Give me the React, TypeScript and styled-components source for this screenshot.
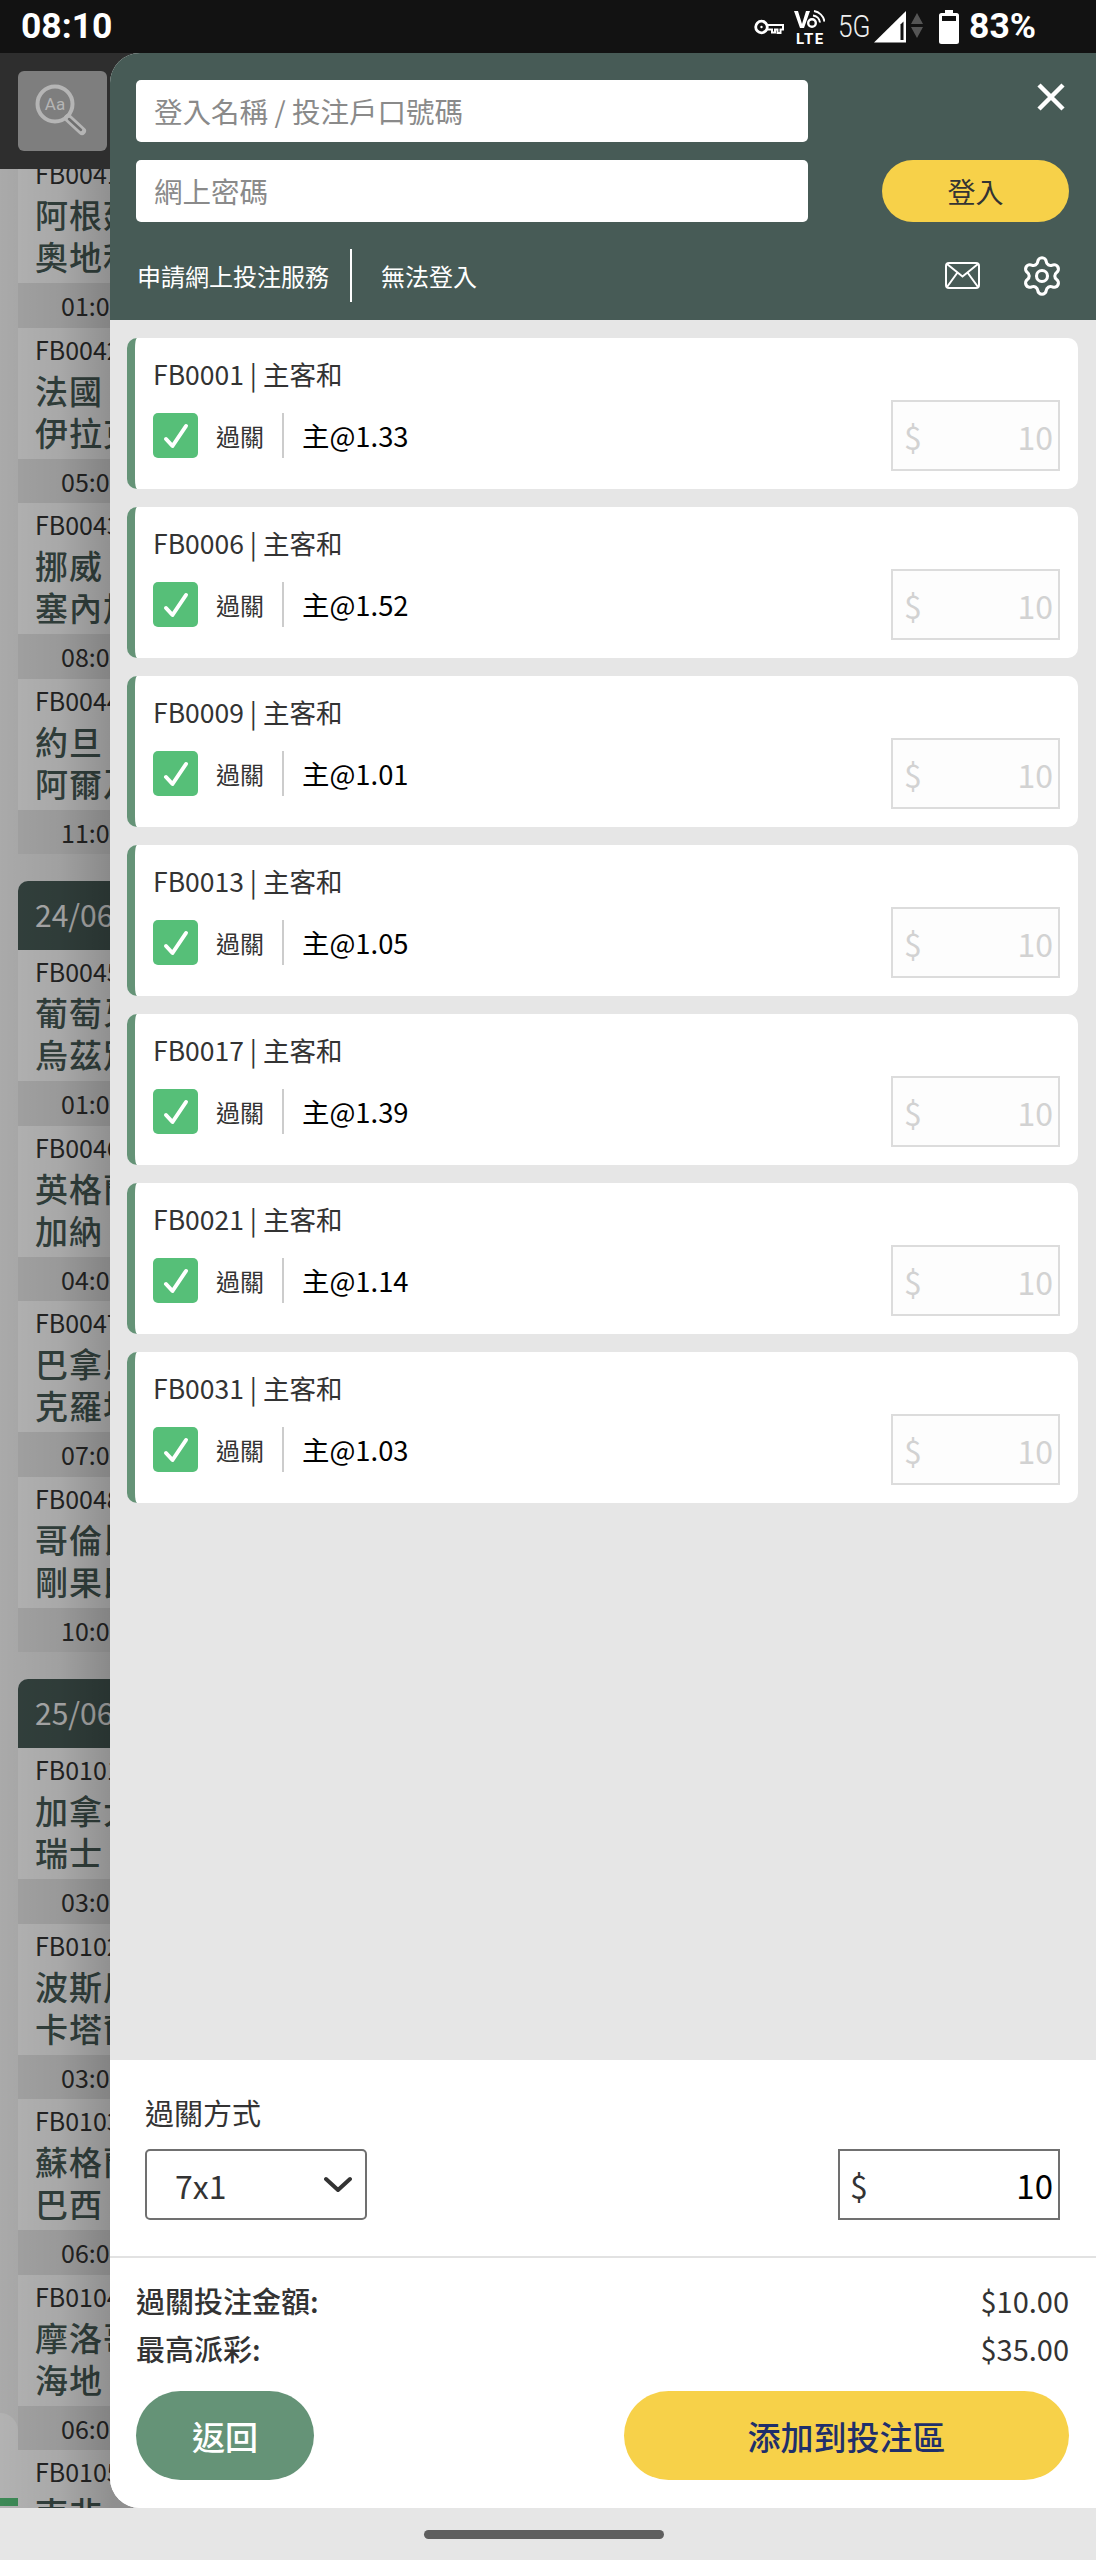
import React from 'react';
import styled, { createGlobalStyle } from 'styled-components';
import { Settings } from 'lucide-react';

const CJK = `"Noto Sans CJK TC", "Noto Sans", sans-serif`;

const Global = createGlobalStyle`
  html, body { margin: 0; padding: 0; background: #e6e6e6; }
  * { box-sizing: border-box; }
  body { font-family: ${CJK}; }
`;

const Page = styled.div`
  width: 1096px;
  height: 2560px;
  position: relative;
  overflow: hidden;
  display: grid;
  grid-template-rows: 53px 1fr 52px;
`;

/* status bar */
const StatusBar = styled.div`
  background: #121212;
  color: #fff;
  display: flex;
  align-items: center;
  justify-content: space-between;
  padding: 0 60px 0 21px;
  font-family: Roboto, sans-serif;
  z-index: 3;
`;
const Clock = styled.div`
  font-size: 35.5px;
  font-weight: 700;
  line-height: 1;
`;
const StatusIcons = styled.div`
  display: flex;
  align-items: center;
`;
const FiveG = styled.span`
  font-size: 31px;
  font-weight: 300;
  display: inline-block;
  width: 30px;
  margin: 0 6px 0 13px;
  transform: scaleX(0.85);
  transform-origin: left center;
  line-height: 1;
  color: #eee;
  white-space: nowrap;
`;
const Percent = styled.span`
  font-size: 35.5px;
  font-weight: 700;
  margin-left: 10px;
  line-height: 1;
`;

/* page behind the sheet */
const Behind = styled.div`
  position: relative;
  overflow: hidden;
  background: #f3f3f3;
  display: flex;
  flex-direction: column;
`;
const AppHeader = styled.div`
  height: 116px;
  flex: none;
  background: #2e2e2e;
  padding: 18px;
  position: relative;
  z-index: 1;
`;
const SearchBtn = styled.div`
  width: 89px;
  height: 80px;
  border-radius: 6px;
  background: #7e7e7e;
`;
const Feed = styled.div`
  margin-top: -17px;
  padding: 0 0 0 18px;
`;
const Group = styled.div`
  margin-bottom: 27px;
`;
const DateBar = styled.div`
  height: 69px;
  background: #475b56;
  border-radius: 10px 10px 0 0;
  color: #f2f2f2;
  font-size: 30px;
  padding: 0 0 0 17px;
  line-height: 67px;
  white-space: nowrap;
`;
const MatchBlock = styled.div`
  height: 131px;
  background: #fff;
  padding: 6px 0 0 17px;
  white-space: nowrap;
  overflow: hidden;
`;
const MatchCode = styled.div`
  font-size: 25px;
  line-height: 30px;
  margin-bottom: 5px;
  color: #333;
`;
const MatchName = styled.div`
  font-size: 33px;
  line-height: 42px;
  color: #475b56;
  font-weight: 500;
  letter-spacing: 1px;
`;
const TimeBlock = styled.div`
  height: 44.5px;
  background: #e8e8e8;
  color: #333;
  font-size: 25px;
  line-height: 44px;
  padding-left: 43px;
  white-space: nowrap;
`;
const EdgeTab = styled.div`
  position: absolute;
  left: 0;
  bottom: 0;
  width: 18px;
  height: 95px;
  background: linear-gradient(#fff 0 85px, #57c47b 85px 93px, #fff 93px);
  border-top-right-radius: 18px;
`;
const Scrim = styled.div`
  position: absolute;
  inset: 0;
  background: linear-gradient(
    90deg,
    rgba(0, 0, 0, 0.3) 0,
    rgba(0, 0, 0, 0.34) 60px,
    rgba(0, 0, 0, 0.44) 112px
  );
`;

/* sheet */
const Sheet = styled.div`
  position: absolute;
  top: 53px;
  bottom: 52px;
  left: 110px;
  right: 0;
  z-index: 2;
  background: #fff;
  border-radius: 30px 0 0 30px;
  overflow: hidden;
  display: flex;
  flex-direction: column;
`;
const SheetHeader = styled.div`
  height: 267px;
  flex: none;
  background: #475b56;
  padding: 27px 27px 0 26px;
  display: flex;
  flex-direction: column;
`;
const LoginRow = styled.div`
  display: flex;
  justify-content: space-between;
  align-items: flex-start;
  margin-bottom: 18px;
`;
const TextInput = styled.input`
  width: 672px;
  height: 62px;
  border: 0;
  border-radius: 5px;
  background: #fff;
  padding: 0 18px 2px;
  font-family: ${CJK};
  font-size: 28.5px;
  outline: none;
  &::placeholder { color: #8a8a8a; opacity: 1; }
`;
const CloseBtn = styled.div`
  width: 28px;
  height: 28px;
  margin: 3px 4px 0 0;
`;
const LoginBtn = styled.div`
  width: 187px;
  height: 62px;
  border-radius: 31px;
  background: #f7d149;
  color: #333;
  font-size: 28px;
  display: flex;
  align-items: center;
  justify-content: center;
`;
const LinksRow = styled.div`
  display: flex;
  align-items: center;
  justify-content: space-between;
  margin-top: 9px;
  height: 53px;
`;
const Links = styled.div`
  display: flex;
  align-items: center;
  height: 100%;
  color: #fff;
  font-size: 24px;
  line-height: 50px;
  padding-left: 1px;
`;
const LinkDivider = styled.div`
  width: 2px;
  height: 53px;
  background: #fff;
  margin: 0 29px 0 21px;
`;
const HeaderIcons = styled.div`
  display: flex;
  align-items: center;
  gap: 40px;
  color: #fff;
  margin-right: 5px;
`;

const BetList = styled.div`
  flex: 1;
  background: #e6e6e6;
  padding: 18px 18px 0 17px;
  display: flex;
  flex-direction: column;
  gap: 18px;
`;
const Card = styled.div`
  height: 151px;
  background: #fff;
  border-left: 8px solid #659377;
  border-radius: 10px;
  padding: 17px 18px 0 18px;
`;
const CardTitle = styled.div`
  font-size: 26.5px;
  line-height: 38px;
  color: #333;
`;
const CardRow = styled.div`
  display: flex;
  align-items: center;
  margin-top: 7px;
`;
const Check = styled.div`
  width: 45px;
  height: 45px;
  border-radius: 5px;
  background: #56bf78;
  display: flex;
  align-items: center;
  justify-content: center;
`;
const ParlayText = styled.div`
  font-size: 24px;
  color: #333;
  margin-left: 18px;
  line-height: 45px;
`;
const VDivider = styled.div`
  width: 2px;
  height: 45px;
  background: #ccc;
  margin: 0 18px;
`;
const Odds = styled.div`
  font-size: 27.4px;
  color: #000;
  line-height: 45px;
`;
const StakeBox = styled.div`
  margin-left: auto;
  width: 169px;
  height: 71px;
  border: 2px solid #dcdcdc;
  background: #fdfdfd;
  display: flex;
  align-items: center;
  justify-content: space-between;
  padding: 0 5px 0 11px;
  color: #d2d2d2;
`;
const Dollar = styled.span`
  font-size: 32px;
`;
const StakeValue = styled.span`
  font-size: 32px;
`;

const Footer = styled.div`
  height: 448px;
  flex: none;
  background: #fff;
  display: flex;
  flex-direction: column;
`;
const ParlaySection = styled.div`
  height: 198px;
  border-bottom: 2px solid #e2e2e2;
  padding: 33px 36px 0 35px;
`;
const ParlayLabel = styled.div`
  font-size: 29px;
  line-height: 38px;
  color: #333;
  margin-bottom: 18px;
`;
const Controls = styled.div`
  display: flex;
  justify-content: space-between;
`;
const SelectBox = styled.div`
  width: 222px;
  height: 71px;
  border: 2px solid #707070;
  border-radius: 5px;
  padding: 0 13px 0 28px;
  display: flex;
  align-items: center;
  justify-content: space-between;
  font-size: 32px;
  color: #333;
`;
const TotalBox = styled.div`
  width: 222px;
  height: 71px;
  border: 2px solid #707070;
  display: flex;
  align-items: center;
  justify-content: space-between;
  padding: 0 5px 0 10px;
`;
const TotalDollar = styled.span`
  font-size: 32px;
  color: #333;
`;
const TotalValue = styled.span`
  font-size: 33px;
  color: #000;
`;
const Summary = styled.div`
  padding: 18px 27px 0 26px;
`;
const SummaryRow = styled.div`
  display: flex;
  justify-content: space-between;
  font-size: 29px;
  line-height: 48px;
  color: #333;
`;
const SummaryLabel = styled.span`
  font-weight: 500;
`;
const Actions = styled.div`
  display: flex;
  justify-content: space-between;
  margin-top: 19px;
  padding: 0 27px 0 26px;
`;
const Pill = styled.div<{ $w: number; $bg: string; $fg: string }>`
  width: ${(p) => p.$w}px;
  height: 89px;
  border-radius: 45px;
  background: ${(p) => p.$bg};
  color: ${(p) => p.$fg};
  font-size: 33px;
  font-weight: 500;
  display: flex;
  align-items: center;
  justify-content: center;
`;

const NavBar = styled.div`
  background: #e6e6e6;
  display: flex;
  justify-content: center;
  padding: 22px 8px 0 0;
  z-index: 3;
`;
const Handle = styled.div`
  width: 240px;
  height: 9px;
  border-radius: 5px;
  background: #5f5f5f;
`;

type Row = { code: string; a: string; b: string; time: string };
const groups: { date?: string; rows: Row[] }[] = [
  {
    rows: [
      { code: 'FB0041', a: '阿根廷', b: '奧地利', time: '01:00' },
      { code: 'FB0042', a: '法國', b: '伊拉克', time: '05:00' },
      { code: 'FB0043', a: '挪威', b: '塞內加爾', time: '08:00' },
      { code: 'FB0044', a: '約旦', b: '阿爾及利亞', time: '11:00' },
    ],
  },
  {
    date: '24/06',
    rows: [
      { code: 'FB0045', a: '葡萄牙', b: '烏茲別克', time: '01:00' },
      { code: 'FB0046', a: '英格蘭', b: '加納', time: '04:00' },
      { code: 'FB0047', a: '巴拿馬', b: '克羅地亞', time: '07:00' },
      { code: 'FB0048', a: '哥倫比亞', b: '剛果民主', time: '10:00' },
    ],
  },
  {
    date: '25/06',
    rows: [
      { code: 'FB0101', a: '加拿大', b: '瑞士', time: '03:00' },
      { code: 'FB0102', a: '波斯尼亞', b: '卡塔爾', time: '03:00' },
      { code: 'FB0103', a: '蘇格蘭', b: '巴西', time: '06:00' },
      { code: 'FB0104', a: '摩洛哥', b: '海地', time: '06:00' },
      { code: 'FB0105', a: '南非', b: '南韓', time: '09:00' },
    ],
  },
];

const bets = [
  ['FB0001', '1.33'],
  ['FB0006', '1.52'],
  ['FB0009', '1.01'],
  ['FB0013', '1.05'],
  ['FB0017', '1.39'],
  ['FB0021', '1.14'],
  ['FB0031', '1.03'],
];

const KeyIcon = () => (
  <svg width="30" height="16" viewBox="0 0 30 16" fill="none" style={{ marginRight: 10 }}>
    <circle cx="7.500" cy="8" r="5.800" stroke="#fff" strokeWidth="2.800" />
    <circle cx="7.500" cy="8" r="1.200" fill="#fff" />
    <path d="M13.500 6H29V10.500H26.500V14H23.500V10.500H21V13.500H18V10.500H13.500" stroke="#fff" strokeWidth="2" fill="none" />
  </svg>
);

const VoLteIcon = () => (
  <svg width="31" height="34" viewBox="0 0 31 34" style={{ marginTop: 1 }}>
    <path d="M0 1H4L8 14L12 1H16L10 18H6Z" fill="#fff" />
    <circle cx="18" cy="13" r="3.800" fill="none" stroke="#fff" strokeWidth="2.400" />
    <path d="M19 5.500A8 8 0 0 1 26 12.500M20 1A13 13 0 0 1 30.500 11.500" fill="none" stroke="#fff" strokeWidth="2" />
    <text x="2" y="33.500" fill="#fff" fontFamily="Roboto, sans-serif" fontWeight="700" fontSize="15" letterSpacing="1.500">LTE</text>
  </svg>
);

const SignalIcon = () => (
  <svg width="49" height="33" viewBox="0 0 49 33">
    <path d="M0 32.500L32 1V32.500Z" fill="#fff" />
    <path d="M26.500 14.500L29.500 11.500V30H26.500Z" fill="#121212" />
    <path d="M43 3L49 14H37Z" fill="#555" />
    <path d="M37 17H49L43 28Z" fill="#555" />
  </svg>
);

const BatteryIcon = () => (
  <svg width="20" height="34" viewBox="0 0 20 34" style={{ marginLeft: 16 }}>
    <path d="M6 0H14V3H17.500A2.500 2.500 0 0 1 20 5.500V31.500A2.500 2.500 0 0 1 17.500 34H2.500A2.500 2.500 0 0 1 0 31.500V5.500A2.500 2.500 0 0 1 2.500 3H6Z" fill="#fff" />
    <rect x="3" y="6" width="14" height="5" fill="#121212" />
  </svg>
);

const SearchIcon = () => (
  <svg width="89" height="80" viewBox="0 0 89 80" fill="none">
    <circle cx="37" cy="33" r="17.500" stroke="#b5b5b5" strokeWidth="4" />
    <path d="M50 47L64 60" stroke="#b5b5b5" strokeWidth="8" strokeLinecap="round" />
    <path d="M51 48L63 59" stroke="#707070" strokeWidth="2.500" strokeLinecap="round" />
    <text x="37" y="39" textAnchor="middle" fill="#b5b5b5" fontFamily="Roboto, sans-serif" fontSize="17">Aa</text>
  </svg>
);

const MailIcon = () => (
  <svg width="35" height="27" viewBox="0 0 35 27" fill="none" stroke="#fff" strokeWidth="2">
    <rect x="1" y="1" width="33" height="25" rx="3" />
    <path d="M2 2L17.500 14.500L33 2M2 25L12.500 10.500M33 25L22.500 10.500" />
  </svg>
);

const CheckMark = () => (
  <svg width="26" height="26" viewBox="0 0 26 26" fill="none">
    <path d="M3 16L9.500 23L23 3" stroke="#fff" strokeWidth="4" strokeLinecap="round" strokeLinejoin="round" />
  </svg>
);

const CloseIcon = () => (
  <svg width="28" height="28" viewBox="0 0 28 28" fill="none">
    <path d="M2 2L26 26M26 2L2 26" stroke="#fff" strokeWidth="4.500" />
  </svg>
);

const Chevron = () => (
  <svg width="28" height="17" viewBox="0 0 28 17" fill="none">
    <path d="M2 3L14 14L26 3" stroke="#333" strokeWidth="4" strokeLinecap="round" strokeLinejoin="round" />
  </svg>
);

export default function App() {
  return (
    <Page>
      <Global />
      <StatusBar>
        <Clock>08:10</Clock>
        <StatusIcons>
          <KeyIcon />
          <VoLteIcon />
          <FiveG>5G</FiveG>
          <SignalIcon />
          <BatteryIcon />
          <Percent>83%</Percent>
        </StatusIcons>
      </StatusBar>

      <Behind>
        <AppHeader>
          <SearchBtn>
            <SearchIcon />
          </SearchBtn>
        </AppHeader>
        <EdgeTab />
        <Feed>
          {groups.map((g, i) => (
            <Group key={i}>
              {g.date && <DateBar>{g.date}</DateBar>}
              {g.rows.map((r) => (
                <div key={r.code}>
                  <MatchBlock>
                    <MatchCode>{r.code}</MatchCode>
                    <MatchName>{r.a}</MatchName>
                    <MatchName>{r.b}</MatchName>
                  </MatchBlock>
                  <TimeBlock>{r.time}</TimeBlock>
                </div>
              ))}
            </Group>
          ))}
        </Feed>
        <Scrim />
      </Behind>

      <Sheet>
        <SheetHeader>
          <LoginRow>
            <TextInput placeholder="登入名稱 / 投注戶口號碼" />
            <CloseBtn>
              <CloseIcon />
            </CloseBtn>
          </LoginRow>
          <LoginRow>
            <TextInput placeholder="網上密碼" type="text" />
            <LoginBtn>登入</LoginBtn>
          </LoginRow>
          <LinksRow>
            <Links>
              申請網上投注服務
              <LinkDivider />
              無法登入
            </Links>
            <HeaderIcons>
              <MailIcon />
              <Settings size={44} strokeWidth={1.7} />
            </HeaderIcons>
          </LinksRow>
        </SheetHeader>

        <BetList>
          {bets.map(([code, odds]) => (
            <Card key={code}>
              <CardTitle>{code} | 主客和</CardTitle>
              <CardRow>
                <Check>
                  <CheckMark />
                </Check>
                <ParlayText>過關</ParlayText>
                <VDivider />
                <Odds>主@{odds}</Odds>
                <StakeBox>
                  <Dollar>$</Dollar>
                  <StakeValue>10</StakeValue>
                </StakeBox>
              </CardRow>
            </Card>
          ))}
        </BetList>

        <Footer>
          <ParlaySection>
            <ParlayLabel>過關方式</ParlayLabel>
            <Controls>
              <SelectBox>
                7x1
                <Chevron />
              </SelectBox>
              <TotalBox>
                <TotalDollar>$</TotalDollar>
                <TotalValue>10</TotalValue>
              </TotalBox>
            </Controls>
          </ParlaySection>
          <Summary>
            <SummaryRow>
              <SummaryLabel>過關投注金額:</SummaryLabel>
              <span>$10.00</span>
            </SummaryRow>
            <SummaryRow>
              <SummaryLabel>最高派彩:</SummaryLabel>
              <span>$35.00</span>
            </SummaryRow>
          </Summary>
          <Actions>
            <Pill $w={178} $bg="#659377" $fg="#fff">返回</Pill>
            <Pill $w={445} $bg="#f7d149" $fg="#1f2f6b">添加到投注區</Pill>
          </Actions>
        </Footer>
      </Sheet>

      <NavBar>
        <Handle />
      </NavBar>
    </Page>
  );
}
